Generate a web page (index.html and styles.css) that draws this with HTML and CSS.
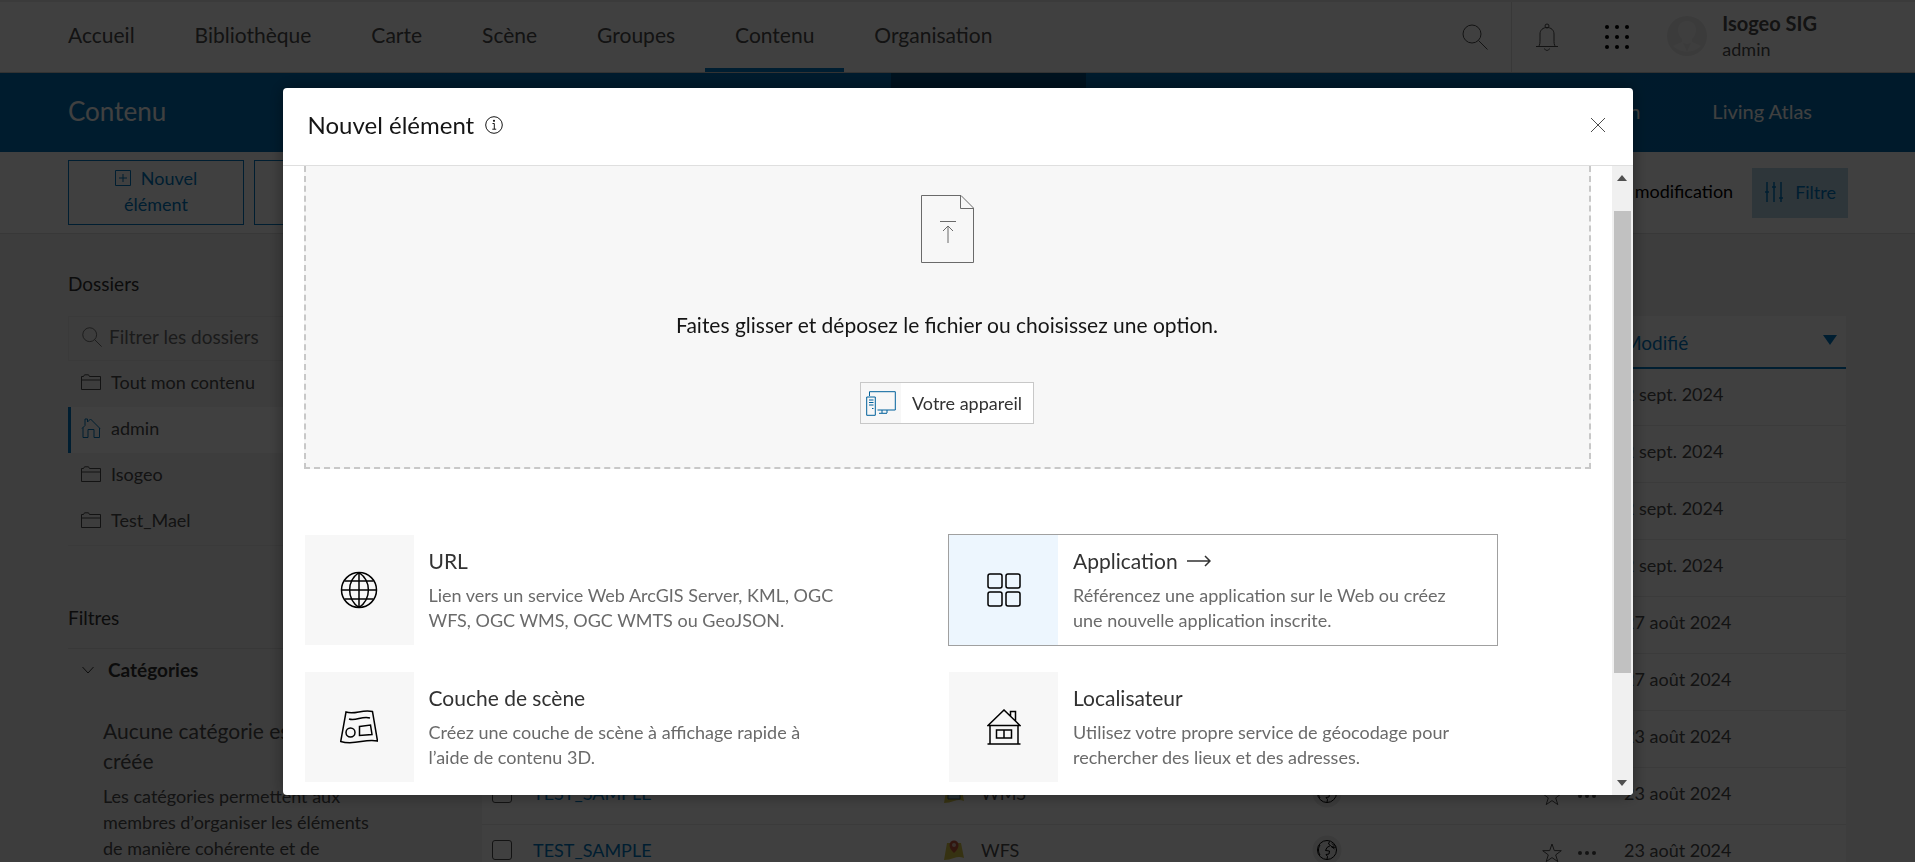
FILE: index.html
```html
<!DOCTYPE html>
<html lang="fr">
<head>
<meta charset="utf-8">
<title>Contenu</title>
<link rel="stylesheet" href="styles.css">
</head>
<body>
<svg class="sprite" aria-hidden="true">
  <symbol id="folder" viewBox="0 0 20 16"><path d="M.5 15.500V2.500H2.500L3.500.8H7.500L8.500 2.500H19.500V15.500ZM.5 6H19.500"/></symbol>
  <symbol id="search" viewBox="0 0 26 26"><circle cx="10" cy="10" r="9"/><path d="M16.500 16.500 25.500 25.500"/></symbol>
  <symbol id="globe" viewBox="0 0 30 30"><circle cx="15" cy="15" r="14.500" class="disc"/><circle cx="15" cy="15" r="9.500"/><path d="M17.500 6.500 16.500 9 18.500 10.500 15 12.500 13.500 15.500 17.500 16 17 19 14 19.500M14 19.500 15.500 21.500 15 24M19 11 22.500 14M20 8.500 22 10.500 20 12.500 24 12"/><path d="M8 10C6 13 6 17 8 20"/></symbol>
  <symbol id="star" viewBox="0 0 20 20"><path d="M10 1 12.300 7.600 19.300 7.700 13.700 11.900 15.800 18.600 10 14.600 4.200 18.600 6.300 11.900.7 7.700 7.700 7.600Z"/></symbol>
</svg>

<div class="page">
  <header class="topbar">
    <nav class="mainnav" aria-label="Navigation principale">
      <a href="#">Accueil</a>
      <a href="#">Bibliothèque</a>
      <a href="#">Carte</a>
      <a href="#">Scène</a>
      <a href="#">Groupes</a>
      <a href="#" class="current">Contenu</a>
      <a href="#">Organisation</a>
    </nav>
    <div class="tools">
      <button class="tool tool-search" aria-label="Rechercher"><svg width="26" height="26"><use href="#search"/></svg></button>
      <button class="tool tool-bell" aria-label="Notifications"><svg width="24" height="28" viewBox="0 0 24 28"><circle cx="12" cy="3" r="2"/><path d="M1 23.500H23M3.500 23.500C5 22 5 20 5 16V11C5 7 8 4.500 12 4.500S19 7 19 11V16C19 20 19 22 20.500 23.500M9.500 25.500C10 28 14 28 14.500 25.500"/></svg></button>
      <button class="tool tool-apps" aria-label="Applications"><svg width="26" height="26" viewBox="0 0 26 26"><g class="solid"><circle cx="3" cy="3" r="2"/><circle cx="13" cy="3" r="2"/><circle cx="23" cy="3" r="2"/><circle cx="3" cy="13" r="2"/><circle cx="13" cy="13" r="2"/><circle cx="23" cy="13" r="2"/><circle cx="3" cy="23" r="2"/><circle cx="13" cy="23" r="2"/><circle cx="23" cy="23" r="2"/></g></svg></button>
      <button class="user">
        <svg class="avatar" width="40" height="40" viewBox="0 0 40 40"><circle cx="20" cy="20" r="20" fill="#ebebeb"/><path fill="#f8f8f8" d="M20 5c6 0 9 4 9 9 0 4-2 7-4 9v3l9 4a20 20 0 0 1-28 0l9-4v-3c-2-2-4-5-4-9 0-5 3-9 9-9z"/><path fill="#ebebeb" d="M16 27l4 9 4-9-4 1z"/></svg>
        <span class="who"><strong>Isogeo SIG</strong><span>admin</span></span>
      </button>
    </div>
  </header>

  <div class="band">
    <h1>Contenu</h1>
    <nav class="tabs" aria-label="Contenu">
      <a href="#" class="active">Mon contenu</a>
      <a href="#">Mes favoris</a>
      <a href="#">Mes groupes</a>
      <a href="#">Mon organisation</a>
      <a href="#">Living Atlas</a>
    </nav>
  </div>

  <div class="toolbar">
    <button class="outline"><svg width="16" height="16" viewBox="0 0 16 16"><path d="M.5.5H15.500V15.500H.5ZM8 4V12M4 8H12"/></svg>Nouvel élément</button>
    <button class="outline" aria-label="Autres actions"></button>
    <span class="sort">Date de modification</span>
    <button class="filter"><svg width="20" height="20" viewBox="0 0 20 20"><path d="M3 0V20M10 0V20M17 0V20M1 10H5M8 5H12M15 16H19"/></svg>Filtre</button>
  </div>

  <div class="main">
    <aside class="side">
      <h2>Dossiers</h2>
      <label class="find"><svg width="20" height="20" viewBox="0 0 26 26"><use href="#search"/></svg><input type="text" placeholder="Filtrer les dossiers" aria-label="Filtrer les dossiers"></label>
      <ul class="folders">
        <li><svg width="20" height="16"><use href="#folder"/></svg><a href="#">Tout mon contenu</a></li>
        <li class="selected"><svg width="20" height="20" viewBox="0 0 20 20"><path d="M1 10.500 4 7.500V1H6.500V4L9.500 1 19 10.500M2 9.500V19.500H7V11.500H13V19.500H18.500V10"/></svg><a href="#">admin</a></li>
        <li><svg width="20" height="16"><use href="#folder"/></svg><a href="#">Isogeo</a></li>
        <li><svg width="20" height="16"><use href="#folder"/></svg><a href="#">Test_Mael</a></li>
      </ul>
      <h2 class="filters">Filtres</h2>
      <h3><svg width="12" height="8" viewBox="0 0 12 8"><path d="M.5 1 6 7 11.500 1"/></svg>Catégories</h3>
      <div class="empty">
        <h4>Aucune catégorie est créée</h4>
        <p>Les catégories permettent aux membres d’organiser les éléments de manière cohérente et de</p>
      </div>
    </aside>

    <table class="items">
      <colgroup><col class="c-check"><col class="c-title"><col class="c-type"><col class="c-share"><col class="c-act"><col class="c-date"></colgroup>
      <thead><tr><th colspan="5"></th><th><button class="sortcol">Modifié<svg width="14" height="10" viewBox="0 0 14 10"><path d="M0 0H14L7 10Z"/></svg></button></th></tr></thead>
      <tbody>
        <tr><td colspan="5"></td><td>2 sept. 2024</td></tr>
        <tr><td colspan="5"></td><td>2 sept. 2024</td></tr>
        <tr><td colspan="5"></td><td>2 sept. 2024</td></tr>
        <tr><td colspan="5"></td><td>2 sept. 2024</td></tr>
        <tr><td colspan="5"></td><td>27 août 2024</td></tr>
        <tr><td colspan="5"></td><td>27 août 2024</td></tr>
        <tr><td colspan="5"></td><td>23 août 2024</td></tr>
        <tr>
          <td><input type="checkbox" aria-label="TEST_SAMPLE WMS"></td>
          <td><a href="#">TEST_SAMPLE</a></td>
          <td><span class="type"><svg width="20" height="20" viewBox="0 0 20 20"><path fill="#d8c84a" d="M3 2H17L20 18Q15 16 10 18T0 20Z"/><path fill="#9fc4cf" stroke="#3a5a66" d="M4 7H16V16H4Z"/></svg>WMS</span></td>
          <td><svg class="globe" width="30" height="30"><use href="#globe"/></svg></td>
          <td><span class="acts"><svg width="20" height="20"><use href="#star"/></svg><svg width="20" height="6" viewBox="0 0 20 6"><g class="solid"><circle cx="3" cy="3" r="2"/><circle cx="10" cy="3" r="2"/><circle cx="17" cy="3" r="2"/></g></svg></span></td>
          <td>23 août 2024</td>
        </tr>
        <tr>
          <td><input type="checkbox" aria-label="TEST_SAMPLE WFS"></td>
          <td><a href="#">TEST_SAMPLE</a></td>
          <td><span class="type"><svg width="20" height="20" viewBox="0 0 20 20"><path fill="#d8c84a" d="M3 3H17L20 18Q15 16 10 18T0 20Z"/><path fill="#c8573c" d="M10 13C7 10 5.500 8 5.500 5a4.500 4.500 0 0 1 9 0C14.500 8 13 10 10 13Z"/><circle cx="10" cy="5" r="2" fill="#e8c8b8"/></svg>WFS</span></td>
          <td><svg class="globe" width="30" height="30"><use href="#globe"/></svg></td>
          <td><span class="acts"><svg width="20" height="20"><use href="#star"/></svg><svg width="20" height="6" viewBox="0 0 20 6"><g class="solid"><circle cx="3" cy="3" r="2"/><circle cx="10" cy="3" r="2"/><circle cx="17" cy="3" r="2"/></g></svg></span></td>
          <td>23 août 2024</td>
        </tr>
      </tbody>
    </table>
  </div>
</div>

<div class="overlay">
  <section class="modal" role="dialog" aria-modal="true" aria-labelledby="modal-title">
    <header class="modal-head">
      <h2 id="modal-title">Nouvel élément</h2>
      <svg width="18" height="18" viewBox="0 0 18 18"><circle cx="9" cy="9" r="8.300"/><path d="M7.500 7.500H9.300V13M7.300 13.200H11.200"/><circle class="solid" cx="9" cy="4.800" r="1.100"/></svg>
      <button class="close" aria-label="Fermer"><svg width="16" height="16" viewBox="0 0 16 16"><path d="M1 1 15 15M15 1 1 15"/></svg></button>
    </header>
    <div class="modal-body">
      <div class="content">
        <div class="drop">
          <svg class="file" width="53" height="68" viewBox="0 0 53 68"><path d="M.5.500H40L52.500 13V67.500H.5ZM39.500 .5V13.500H52.500M19 26.500H35M27 48V31M22 36 27 31 32 36"/></svg>
          <p>Faites glisser et déposez le fichier ou choisissez une option.</p>
          <button class="device"><span class="pic"><svg width="30" height="25" viewBox="0 0 30 25"><path d="M.7 6H9.300V24.300H.7ZM3 9H7.500M3 11.500H7.500M3 14H7.500M6 17.500H7.500M3.500 5V.7H29.300V19H11.500M16 19V22M21 19V22M13 22.300H21"/></svg></span>Votre appareil</button>
        </div>
        <div class="cards">
          <button class="card">
            <span class="thumb"><svg width="38" height="38" viewBox="0 0 38 38"><circle cx="19" cy="19" r="17.500"/><path d="M19 1.500V36.500M1.500 19H36.500M4.500 10H33.500M4.500 28H33.500M19 1.500C6.500 10 6.500 28 19 36.500M19 1.500C31.500 10 31.500 28 19 36.500"/></svg></span>
            <span class="info"><span class="name">URL</span><span class="desc">Lien vers un service Web ArcGIS Server, KML, OGC<br>WFS, OGC WMS, OGC WMTS ou GeoJSON.</span></span>
          </button>
          <button class="card hover">
            <span class="thumb"><svg width="34" height="34" viewBox="0 0 34 34"><rect x="1" y="1" width="14" height="14" rx="2"/><rect x="19" y="1" width="14" height="14" rx="2"/><rect x="1" y="19" width="14" height="14" rx="2"/><rect x="19" y="19" width="14" height="14" rx="2"/></svg></span>
            <span class="info"><span class="name">Application<svg width="24" height="12" viewBox="0 0 24 12"><path d="M0 6H23M18 1 23 6 18 11"/></svg></span><span class="desc">Référencez une application sur le Web ou créez<br>une nouvelle application inscrite.</span></span>
          </button>
          <button class="card">
            <span class="thumb"><svg width="38" height="36" viewBox="0 0 38 36"><path d="M6 3C15 6 22 0 32.500 2.500L37.500 32C25 29 15 37 .7 32.500ZM9 10C16 12.500 22 6.500 30 9M19.500 17.500 30.500 16 32 25.500 19.500 26.500Z"/><circle cx="10.500" cy="23.500" r="4.500"/></svg></span>
            <span class="info"><span class="name">Couche de scène</span><span class="desc">Créez une couche de scène à affichage rapide à<br>l’aide de contenu 3D.</span></span>
          </button>
          <button class="card">
            <span class="thumb"><svg width="34" height="36" viewBox="0 0 34 36"><path d="M1 16.500 17 1 33 16.500ZM3 16.500V35M31 16.500V35M.5 35H33.500M9.500 21H24.500V29H9.500ZM17 21V29M23.500 7V2.500H28.500V12"/></svg></span>
            <span class="info"><span class="name">Localisateur</span><span class="desc">Utilisez votre propre service de géocodage pour<br>rechercher des lieux et des adresses.</span></span>
          </button>
        </div>
      </div>
      <div class="scroll" aria-hidden="true">
        <svg width="10" height="6" viewBox="0 0 10 6"><path d="M0 6 5 0 10 6Z"/></svg>
        <div class="track"><div class="handle"></div></div>
        <svg width="10" height="6" viewBox="0 0 10 6"><path d="M0 0H10L5 6Z"/></svg>
      </div>
    </div>
  </section>
</div>
</body>
</html>
```

FILE: styles.css
```css
* { box-sizing: border-box; }

html, body { height: 100%; }

body {
  margin: 0;
  overflow: hidden;
  background: #f3f3f3;
  color: #4c4c4c;
  font: 400 18px/26px Lato, "Open Sans", sans-serif;
}

h1, h2, h3, h4, p, ul { margin: 0; padding: 0; font-weight: 400; }
ul { list-style: none; }
a { color: inherit; text-decoration: none; }
button { margin: 0; padding: 0; border: 0; background: none; color: inherit; font: inherit; text-align: left; }
svg { flex: none; fill: none; stroke: currentColor; }
.solid { fill: currentColor; stroke: none; }
.sprite { position: absolute; width: 0; height: 0; }

.page { height: 100vh; overflow: hidden; }

.topbar {
  display: flex;
  justify-content: space-between;
  height: 73px;
  padding: 0 38px;
  border-top: 2px solid #ebebeb;
  border-bottom: 1px solid #cacaca;
  background: #fff;
}
.mainnav { display: flex; font-size: 21px; }
.mainnav a { display: flex; align-items: center; padding: 0 30px; border-bottom: 4px solid transparent; }
.mainnav .current { border-bottom-color: #0079c1; }

.tools { display: flex; align-items: center; padding-right: 60px; }
.tool { display: flex; align-items: center; justify-content: center; height: 100%; width: 70px; }
.tool-search { width: 74px; border-right: 1px solid #dedede; }
.tool-apps { color: #000; }
.user { display: flex; align-items: center; gap: 15px; margin-left: 15px; padding-bottom: 2px; }
.avatar { stroke: none; }
.who { display: grid; }
.who strong { font-size: 20px; font-weight: 700; }

.band {
  display: flex;
  justify-content: space-between;
  height: 79px;
  padding: 0 67px 0 68px;
  background: linear-gradient(90deg, #0070b8, #0069ac);
  color: #fff;
}
.band h1 { align-self: center; padding-bottom: 4px; font-size: 26px; line-height: 32px; }
.tabs { display: flex; font-size: 20px; }
.tabs a { display: flex; align-items: center; padding: 0 36px 4px; }
.tabs .active { margin-right: 6px; padding: 0 39px 4px; background: #00497a; }

.toolbar {
  display: flex;
  align-items: center;
  gap: 10px;
  height: 82px;
  padding: 0 67px 0 68px;
  border-bottom: 1px solid #dedede;
  background: #fff;
}
.outline { width: 176px; height: 65px; padding: 0 40px 4px; border: 1px solid #0079c1; color: #0079c1; text-align: center; }
.outline svg { margin-right: 10px; vertical-align: -1px; }
.sort { margin-left: auto; margin-right: 9px; padding-bottom: 4px; color: #000; }
.filter { display: flex; align-items: center; gap: 11px; height: 50px; padding: 0 12px 2px; background: #b8d6e8; color: #0079c1; }
.filter svg { stroke-width: 1.500; }

.main { display: flex; gap: 50px; padding: 37px 69px 0 68px; }
.side { flex: none; width: 364px; }
.side h2 { color: #323232; font-size: 19px; }
.find {
  display: flex;
  align-items: center;
  gap: 7px;
  height: 45px;
  margin-top: 19px;
  padding: 0 14px 4px 13px;
  border: 1px solid #e6e6e6;
  font-size: 19px;
}
.find input { flex: 1; min-width: 0; padding: 0; border: 0; background: none; font: inherit; }
.find input::placeholder { color: #6e6e6e; opacity: 1; }
.folders { border-bottom: 1px solid #e6e6e6; }
.folders li { display: flex; align-items: center; gap: 10px; height: 46px; padding: 0 0 4px 13px; }
.folders .selected { padding-left: 10px; border-left: 3px solid #0079c1; background: #fff; }
.folders .selected svg { color: #0079c1; }
.side .filters { margin-top: 59px; padding-bottom: 17px; border-bottom: 1px solid #dedede; }
.side h3 { display: flex; align-items: center; gap: 14px; margin-top: 8px; padding-left: 14px; color: #323232; font-size: 19px; font-weight: 700; }
.empty { width: 320px; margin-top: 33px; padding-left: 35px; }
.empty h4 { width: 220px; font-size: 21px; line-height: 30px; }
.empty p { margin-top: 7px; }

.items { flex: 1; align-self: start; margin-top: 45px; border-collapse: collapse; table-layout: fixed; background: #fff; }
.c-check { width: 51px; }
.c-type { width: 368px; }
.c-share { width: 230px; }
.c-act { width: 82px; }
.c-date { width: 222px; }
.items th { height: 52px; padding: 2px 0 0; border-bottom: 2px solid #0079c1; font-weight: 400; }
.items td { height: 57px; padding: 0 0 5px; border-bottom: 1px solid #eaeaea; }
.items a { color: #0079c1; }
.items input { appearance: none; display: block; width: 20px; height: 20px; margin: 0 0 0 10px; border: 1px solid #4c4c4c; border-radius: 3px; }
.sortcol { display: flex; justify-content: space-between; align-items: center; width: 100%; padding-right: 9px; color: #0079c1; font-size: 19px; }
.sortcol svg { margin-bottom: 6px; fill: currentColor; stroke: none; }
.type { display: flex; align-items: center; gap: 17px; }
.type svg { stroke: none; }
.globe { display: block; color: #000; }
.disc { fill: #eaeaea; stroke: none; }
.acts { display: flex; align-items: center; gap: 15px; padding-top: 5px; }

.overlay {
  position: fixed;
  inset: 0;
  display: flex;
  justify-content: center;
  padding: 88px 60px 67px;
  background: rgba(0, 0, 0, .75);
}
.modal {
  display: flex;
  flex-direction: column;
  width: 1350px;
  max-width: 100%;
  overflow: hidden;
  border-radius: 4px;
  background: #fff;
  box-shadow: 0 0 16px rgba(0, 0, 0, .4);
}
.modal-head {
  display: flex;
  flex: none;
  align-items: center;
  gap: 11px;
  height: 78px;
  padding: 0 27px 4px 25px;
  border-bottom: 1px solid #dfdfdf;
  color: #151515;
}
.modal-head h2 { font-size: 24px; line-height: 28px; }
.close { margin-left: auto; color: #4c4c4c; }
.close svg { display: block; }
.modal-body { display: flex; flex: 1; min-height: 0; }
.content { flex: 1; min-width: 0; overflow: hidden; padding: 0 21px; }

.drop {
  display: flex;
  flex-direction: column;
  align-items: center;
  padding: 29px 0 43px;
  border: 2px dashed #c8c8c8;
  border-top: 0;
  background: #f7f7f7;
}
.file { color: #6a6a6a; }
.drop p { margin: 48px 0 43px; color: #151515; font-size: 21px; line-height: 28px; }
.device { display: flex; align-items: center; height: 42px; padding-right: 11px; border: 1px solid #c8c8c8; background: #fff; color: #323232; }
.pic { display: flex; align-items: center; justify-content: center; width: 40px; height: 40px; margin-right: 11px; background: #f7f7f7; color: #00619b; }

.cards { display: grid; grid-template-columns: 1fr 1fr; gap: 25px 2px; margin-top: 65px; }
.card { display: flex; width: 550px; max-width: 96%; height: 112px; border: 1px solid transparent; }
.card.hover { border-color: #a0a0a0; }
.thumb { display: flex; flex: none; align-items: center; justify-content: center; width: 109px; background: #f7f7f7; color: #000; }
.thumb svg { stroke-width: 1.500; }
.hover .thumb { background: #edf6fe; }
.info { display: block; padding: 11px 8px 0 15px; }
.name { display: flex; align-items: center; gap: 9px; margin-bottom: 7px; color: #323232; font-size: 21px; line-height: 30px; }
.name svg { stroke-width: 1.500; }
.desc { display: block; color: #6a6a6a; line-height: 25px; }

.scroll { display: flex; flex: none; flex-direction: column; align-items: center; width: 21px; padding: 9px 0; background: #f0f0f0; }
.scroll svg { fill: #505050; stroke: none; }
.track { flex: 1; width: 17px; padding: 30px 0 107px; }
.handle { height: 100%; background: #c1c1c1; }
```
